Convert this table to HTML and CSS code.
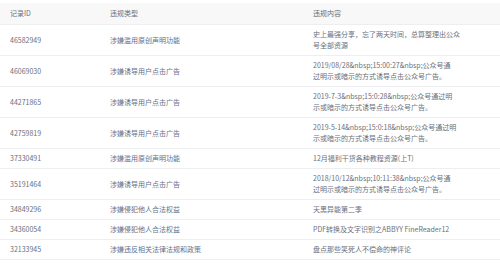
FILE: index.html
```html
<!DOCTYPE html>
<html lang="zh">
<head>
<meta charset="utf-8">
<link rel="stylesheet" href="styles.css">
</head>
<body>
<div class="wrap">
<table class="tbl">
  <thead>
    <tr><th class="c-id">记录ID</th><th class="c-type">违规类型</th><th class="c-content">违规内容</th></tr>
  </thead>
  <tbody>
    <tr><td>46582949</td><td class="type">涉嫌滥用原创声明功能</td><td class="content">史上最强分享，忘了两天时间，总算整理出公众<br>号全部资源</td></tr>
    <tr><td>46069030</td><td class="type">涉嫌诱导用户点击广告</td><td class="content">2019/08/28&amp;nbsp;15:00:27&amp;nbsp;公众号通<br>过明示或暗示的方式诱导点击公众号广告。</td></tr>
    <tr><td>44271865</td><td class="type">涉嫌诱导用户点击广告</td><td class="content">2019-7-3&amp;nbsp;15:0:28&amp;nbsp;公众号通过明<br>示或暗示的方式诱导点击公众号广告。</td></tr>
    <tr><td>42759819</td><td class="type">涉嫌诱导用户点击广告</td><td class="content">2019-5-14&amp;nbsp;15:0:18&amp;nbsp;公众号通过明<br>示或暗示的方式诱导点击公众号广告。</td></tr>
    <tr><td>37330491</td><td class="type">涉嫌滥用原创声明功能</td><td class="content">12月福利干货各种教程资源(上T)</td></tr>
    <tr><td>35191464</td><td class="type">涉嫌诱导用户点击广告</td><td class="content">2018/10/12&amp;nbsp;10:11:38&amp;nbsp;公众号通<br>过明示或暗示的方式诱导点击公众号广告。</td></tr>
    <tr><td>34849296</td><td class="type">涉嫌侵犯他人合法权益</td><td class="content">天黑异能第二季</td></tr>
    <tr><td>34360054</td><td class="type">涉嫌侵犯他人合法权益</td><td class="content">PDF转换及文字识别之ABBYY FineReader12</td></tr>
    <tr><td>32133945</td><td class="type">涉嫌违反相关法律法规和政策</td><td class="content">盘点那些笑死人不偿命的神评论</td></tr>
  </tbody>
</table>
</div>
</body>
</html>
```
FILE: styles.css
```css
html, body {
  margin: 0;
  padding: 0;
  background: #fff;
}
.wrap {
  padding-top: 3px;
}
.tbl {
  width: 500px;
  border-collapse: collapse;
  table-layout: fixed;
  font-family: "Noto Sans CJK SC", "Noto Sans", sans-serif;
  font-size: 7px;
  line-height: 11px;
  color: #6a6f7a;
}
.tbl th {
  background: #f8f8f9;
  font-weight: normal;
  text-align: left;
  height: 21px;
  padding: 0 0 0 10px;
  border-bottom: 1px solid #eceef0;
}
.c-id { width: 90px; }
.c-type { width: 193px; }
.tbl td {
  padding: 4px 20px 4px 10px;
  border-bottom: 1px solid #eceef0;
  vertical-align: middle;
  white-space: nowrap;
}
.tbl td.type {
  color: #66708a;
}
```
